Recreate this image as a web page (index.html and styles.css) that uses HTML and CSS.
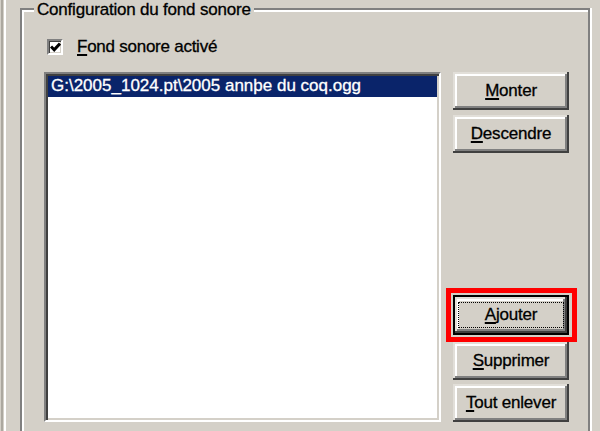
FILE: index.html
```html
<!DOCTYPE html>
<html lang="fr">
<head>
  <meta charset="UTF-8">
  <title>Configuration du fond sonore</title>
  <link rel="stylesheet" href="styles.css">
</head>
<body>
  <div class="frame">
    <div class="sheet">
      <div class="group">
        <div class="group-title">Configuration du fond sonore</div>

        <label class="check-row">
          <span class="checkbox">
            <svg width="11" height="10" viewBox="0 0 11 10"><path d="M1 4.5 L4.2 7.8 L10 1.5" fill="none" stroke="#000" stroke-width="3"/></svg>
          </span>
          <span class="label"><u>F</u>ond sonore activé</span>
        </label>

        <div class="content">
          <div class="listbox">
            <div class="list-item selected">G:\2005_1024.pt\2005 annþe du coq.ogg</div>
          </div>

          <div class="buttons">
            <button class="btn"><u>M</u>onter</button>
            <button class="btn"><u>D</u>escendre</button>

            <div class="bottom-buttons">
              <div class="highlight">
                <button class="btn default"><span class="focus"><u>A</u>jouter</span></button>
              </div>
              <button class="btn"><u>S</u>upprimer</button>
              <button class="btn spaced"><u>T</u>out enlever</button>
            </div>
          </div>
        </div>
      </div>
    </div>
  </div>
</body>
</html>
```

FILE: styles.css
```css
html, body {
  height: 100%;
}

body {
  margin: 0;
  background: #d4d0c8;
  font-family: "Liberation Sans", Arial, sans-serif;
  font-size: 17px;
  color: #000;
  overflow: hidden;
  -webkit-text-stroke: 0.3px;
}

.frame {
  height: 100%;
  margin-left: 1px;
  padding-left: 1px;
  border-left: 2px solid #aca89f;
}

.sheet {
  height: 100%;
  box-sizing: border-box;
  padding-top: 8px;
  border-left: 2px solid #fff;
  display: flex;
  flex-direction: column;
}

/* group box is cut by the bottom of the screenshot, so no bottom edge */
.group {
  position: relative;
  flex: 1;
  margin: 0 10px 0 14px;
  border: 2px solid #808080;
  border-bottom: 0;
  box-shadow: inset 2px 2px 0 #fff, 2px 0 0 #fff;
}

.group-title {
  position: absolute;
  top: -10px;
  left: 12px;
  padding: 0 3px;
  background: #d4d0c8;
  line-height: 20px;
  letter-spacing: -0.2px;
}

u {
  text-decoration-thickness: 2px;
  text-underline-offset: 2px;
}

.check-row {
  display: flex;
  align-items: center;
  gap: 14px;
  height: 20px;
  margin: 27px 0 0 25px;
}

.checkbox {
  width: 16px;
  height: 16px;
  box-sizing: border-box;
  display: flex;
  align-items: center;
  justify-content: center;
  background: #fff;
  border: 2px solid;
  border-color: #808080 #fff #fff #808080;
  box-shadow: inset 1px 1px 0 #404040, inset -1px -1px 0 #d4d0c8;
}

.label {
  letter-spacing: -0.25px;
  line-height: 20px;
}

.content {
  display: flex;
  gap: 12px;
  margin: 15px 0 0 22px;
}

.listbox {
  width: 397px;
  height: 350px;
  box-sizing: border-box;
  padding: 2px;
  background: #fff;
  border: 2px solid;
  border-color: #808080 #fff #fff #808080;
  box-shadow: inset 2px 2px 0 #404040, inset -2px -2px 0 #d4d0c8;
}

.list-item {
  height: 21px;
  line-height: 20px;
  padding-left: 3px;
  white-space: nowrap;
}

.selected {
  background: #0a246a;
  color: #fff;
}

.buttons {
  width: 116px;
  height: 350px;
  display: flex;
  flex-direction: column;
  gap: 5px;
}

.bottom-buttons {
  margin-top: auto;
  display: flex;
  flex-direction: column;
}

.btn {
  width: 116px;
  height: 38px;
  box-sizing: border-box;
  padding: 0;
  border: none;
  background: #d4d0c8;
  color: #000;
  font: inherit;
  letter-spacing: -0.2px;
  box-shadow:
    inset -2px -2px 0 #404040,
    inset 2px 2px 0 #e2dfd9,
    inset -4px -4px 0 #808080,
    inset 4px 4px 0 #fff;
}

.btn.spaced {
  margin-top: 4px;
}

.highlight {
  margin: 0 -8px 0 -7px;
  padding: 2px 3px 2px 2px;
  border: 5px solid #f00;
}

.btn.default {
  height: 40px;
  padding: 7px 5px;
  box-shadow:
    inset 0 0 0 2px #000,
    inset -4px -4px 0 #404040,
    inset 4px 4px 0 #e2dfd9,
    inset -6px -6px 0 #808080,
    inset 6px 6px 0 #fff;
}

.focus {
  display: block;
  height: 100%;
  box-sizing: border-box;
  border: 1px dotted #000;
  line-height: 24px;
}
```
